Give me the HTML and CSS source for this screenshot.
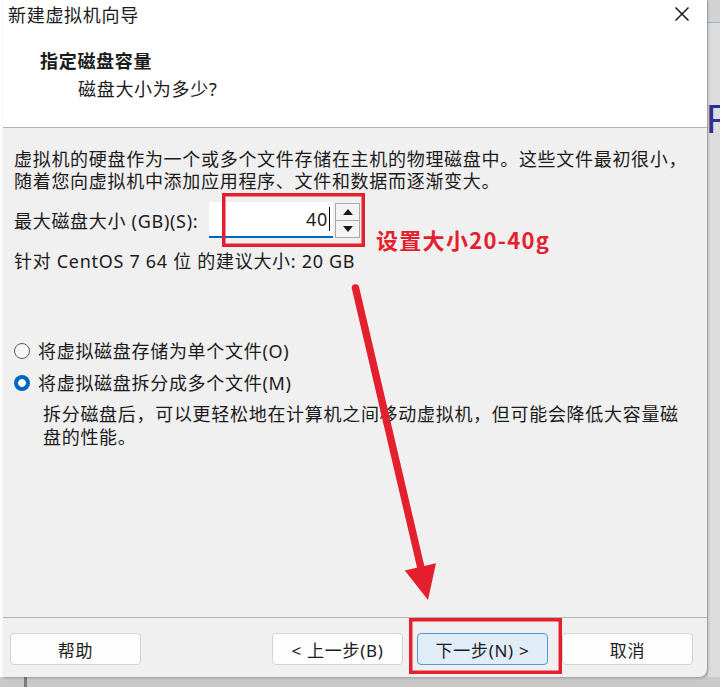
FILE: index.html
```html
<html>
  <head>
    <title>新建虚拟机向导</title>
    <meta charset="utf-8">
    <link rel="stylesheet" href="styles.css">
  </head>
  <body>
    <div class="desk">
      <div class="edge"></div>
      <div class="wizard">
        <div class="titlebar">
          <span>新建虚拟机向导</span>
          <svg class="close" width="16" height="16" viewBox="0 0 16 16">
            <path d="M1.5 1.5 L14.5 14.5 M14.5 1.5 L1.5 14.5" stroke="#1a1a1a" stroke-width="1.5" fill="none"/>
          </svg>
        </div>
        <div class="header">
          <h1>指定磁盘容量</h1>
          <p>磁盘大小为多少?</p>
        </div>
        <div class="content">
          <p class="intro">虚拟机的硬盘作为一个或多个文件存储在主机的物理磁盘中。这些文件最初很小，<br>随着您向虚拟机中添加应用程序、文件和数据而逐渐变大。</p>
          <div class="size-row">
            <label class="size-label">最大磁盘大小 (GB)(S):</label>
            <div class="size-input"><span class="caret">40</span></div>
            <div class="spinner">
              <span class="spin up"><i></i></span>
              <span class="spin down"><i></i></span>
            </div>
          </div>
          <p class="hint">针对 CentOS 7 64 位 的建议大小: 20 GB</p>
          <div class="options">
            <div class="option"><span class="radio"></span>将虚拟磁盘存储为单个文件(O)</div>
            <div class="option"><span class="radio checked"></span>将虚拟磁盘拆分成多个文件(M)</div>
            <p class="option-note">拆分磁盘后，可以更轻松地在计算机之间移动虚拟机，但可能会降低大容量磁<br>盘的性能。</p>
          </div>
        </div>
        <div class="footer">
          <button class="btn">帮助</button>
          <div class="nav">
            <button class="btn">&lt; 上一步(B)</button>
            <button class="btn primary">下一步(N) &gt;</button>
            <button class="btn">取消</button>
          </div>
        </div>
      </div>
      <div class="behind"><span class="behind-letter">P</span></div>
    </div>
    <div class="taskbar"><span class="tick"></span></div>

    <!-- red notes drawn over the dialog -->
    <svg class="marks" width="720" height="687" viewBox="0 0 720 687">
      <rect x="223.75" y="194.75" width="139.5" height="50.5" fill="none" stroke="#e5202e" stroke-width="3.5"/>
      <rect x="410.75" y="619.75" width="149.5" height="52.5" fill="none" stroke="#e5202e" stroke-width="3.5"/>
      <line x1="355.5" y1="288" x2="421" y2="568" stroke="#e5202e" stroke-width="7.5" stroke-linecap="round"/>
      <polygon points="404.8,570.6 436,563.2 428,600" fill="#e5202e"/>
    </svg>
    <div class="note">设置大小20-40g</div>
  </body>
</html>
```

FILE: styles.css
```css
/* wizard window on a grey desktop */
body {
  margin: 0;
  width: 720px;
  height: 687px;
  overflow: hidden;
  background-color: #cbcbcb;
  font-family: "Noto Sans", "Noto Sans CJK SC", sans-serif;
  font-size: 18px;
  letter-spacing: 0.7px;
  color: #1b1b1b;
  position: relative;
}
p, h1 {
  margin: 0;
}
.desk {
  display: flex;
  height: 677px;
}
.edge {
  width: 3px;
  background-color: #fff;
}
.wizard {
  width: 704px;
  display: flex;
  flex-direction: column;
  background-color: #f0f0f0;
  border-bottom-right-radius: 8px;
  box-shadow: 1px 1px 3px rgba(0, 0, 0, 0.25);
  position: relative;
  z-index: 1;
}

/* title and page header */
.titlebar {
  height: 30px;
  display: flex;
  align-items: center;
  justify-content: space-between;
  padding: 0 17px 0 5px;
  background-color: #fff;
  line-height: 24px;
}
.close {
  margin-top: -2px;
}
.header {
  background-color: #fff;
  border-bottom: 1px solid #b4b4b4;
  padding-top: 19px;
  box-sizing: border-box;
  height: 98px;
  line-height: 24px;
}
.header h1 {
  font-size: 18px;
  font-weight: bold;
  margin-left: 37px;
}
.header p {
  margin-top: 4px;
  margin-left: 75px;
}

/* main area */
.content {
  flex: 1;
  padding: 20px 0 0 11px;
  border-bottom: 1px solid #b4b4b4;
}
.intro {
  line-height: 22px;
}
.size-row {
  display: flex;
  align-items: center;
  margin-top: 10px;
}
.size-label {
  width: 195px;
}
.size-input {
  width: 124px;
  height: 36px;
  box-sizing: border-box;
  background-color: #fff;
  border-bottom: 2px solid #0067c0;
  text-align: right;
  padding-right: 3px;
  line-height: 34px;
}
.caret {
  border-right: 1px solid #000;
  padding-right: 1px;
}
.spinner {
  display: flex;
  flex-direction: column;
  margin-left: 2px;
  width: 25px;
  height: 35px;
}
.spin {
  flex: 1;
  border: 1px solid #a9a9a9;
  background-color: #f4f4f4;
  display: flex;
  align-items: center;
  justify-content: center;
}
.spin.down {
  border-top: none;
}
.spin i {
  width: 0;
  height: 0;
  border-left: 5px solid transparent;
  border-right: 5px solid transparent;
}
.spin.up i {
  border-bottom: 6px solid #1a1a1a;
}
.spin.down i {
  border-top: 6px solid #1a1a1a;
}
.hint {
  margin-top: 12px;
  line-height: 22px;
}
.options {
  margin-top: 68px;
  line-height: 22px;
}
.option {
  display: flex;
  align-items: center;
  gap: 8px;
  margin-bottom: 10px;
}
.radio {
  width: 16px;
  height: 16px;
  box-sizing: border-box;
  border-radius: 50%;
  border: 1px solid #5a5a5a;
  background-color: #f7f7f7;
}
.radio.checked {
  border: none;
  background: radial-gradient(circle, #fff 0 3.5px, #0067c0 4.2px);
}
.option-note {
  margin-left: 29px;
  margin-top: -1px;
  line-height: 23px;
}

/* button row */
.footer {
  height: 59px;
  display: flex;
  justify-content: space-between;
  padding: 15px 14px 0 7px;
  box-sizing: border-box;
}
.nav {
  display: flex;
  gap: 14px;
}
.btn {
  width: 131px;
  height: 32px;
  font-family: inherit;
  font-size: 17px;
  letter-spacing: 0.7px;
  color: #1b1b1b;
  background-color: #fdfdfd;
  border: 1px solid #d3d3d3;
  border-radius: 4px;
  padding: 0;
}
.btn.primary {
  background-color: #e0ecf8;
  border-color: #4e98dc;
}

/* what shows beside and under the window */
.behind {
  flex: 1;
  overflow: hidden;
  background: linear-gradient(#d3d3d3 0 22px, #8fb8d6 22px 23px, #dcdcdc 23px);
  border-left: 1px solid #c2c2c2;
}
.behind-letter {
  display: block;
  margin-top: 97px;
  margin-left: -2px;
  font-family: "Liberation Sans", sans-serif;
  font-size: 40px;
  line-height: 44px;
  color: #2e3192;
}
.taskbar {
  height: 10px;
  background-color: #c9c9c9;
  position: relative;
}
.tick {
  display: block;
  margin-left: 24px;
  width: 3px;
  height: 10px;
  background-color: #7c7c7c;
}

/* annotations */
.marks {
  position: absolute;
  left: 0;
  top: 0;
  z-index: 2;
}
.note {
  position: absolute;
  left: 376px;
  top: 223px;
  z-index: 2;
  font-family: "Noto Sans CJK SC", sans-serif;
  font-weight: bold;
  font-size: 22px;
  letter-spacing: 1.3px;
  color: #e5202e;
}
```
